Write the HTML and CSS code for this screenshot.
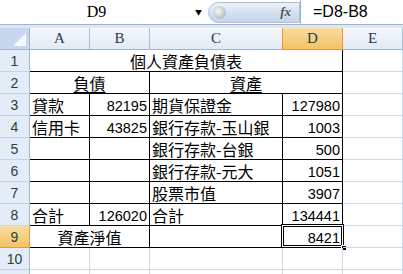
FILE: index.html
```html
<!DOCTYPE html>
<html lang="zh-Hant">

<head>
    <meta charset="UTF-8">
    <title>個人資產負債表</title>
    <link rel="stylesheet" href="styles.css">
</head>

<body>

    <div class="formula-bar">
        <div class="name-box">D9</div>
        <div class="drop">&#9660;</div>
        <div class="fx-button">
            <span class="knob"></span>
            <span class="fx">fx</span>
        </div>
        <div class="formula">=D8-B8</div>
    </div>
    <div class="band"></div>

    <div class="sheet">
        <!-- column headers -->
        <div class="corner">
            <svg width="29" height="21" viewBox="0 0 29 21">
                <polygon points="26,5 26,18 13,18" fill="#f4f7fb" />
            </svg>
        </div>
        <div class="col-head">A</div>
        <div class="col-head">B</div>
        <div class="col-head">C</div>
        <div class="col-head active">D</div>
        <div class="col-head">E</div>

        <!-- row 1 -->
        <div class="row-head">1</div>
        <div class="cell c span4 bb br">個人資產負債表</div>
        <div class="cell"></div>

        <!-- row 2 -->
        <div class="row-head">2</div>
        <div class="cell c span2 bb br"><u>負債</u></div>
        <div class="cell c span2 bb br"><u>資產</u></div>
        <div class="cell"></div>

        <!-- row 3 -->
        <div class="row-head">3</div>
        <div class="cell l bb br">貸款</div>
        <div class="cell r num bb br">82195</div>
        <div class="cell l bb br">期貨保證金</div>
        <div class="cell r num bb br">127980</div>
        <div class="cell"></div>

        <!-- row 4 -->
        <div class="row-head">4</div>
        <div class="cell l bb br">信用卡</div>
        <div class="cell r num bb br">43825</div>
        <div class="cell l bb br">銀行存款-玉山銀</div>
        <div class="cell r num bb br">1003</div>
        <div class="cell"></div>

        <!-- row 5 -->
        <div class="row-head">5</div>
        <div class="cell bb br"></div>
        <div class="cell bb br"></div>
        <div class="cell l bb br">銀行存款-台銀</div>
        <div class="cell r num bb br">500</div>
        <div class="cell"></div>

        <!-- row 6 -->
        <div class="row-head">6</div>
        <div class="cell bb br"></div>
        <div class="cell bb br"></div>
        <div class="cell l bb br">銀行存款-元大</div>
        <div class="cell r num bb br">1051</div>
        <div class="cell"></div>

        <!-- row 7 -->
        <div class="row-head">7</div>
        <div class="cell bb br"></div>
        <div class="cell bb br"></div>
        <div class="cell l bb br">股票市值</div>
        <div class="cell r num bb br">3907</div>
        <div class="cell"></div>

        <!-- row 8 -->
        <div class="row-head">8</div>
        <div class="cell l bb br">合計</div>
        <div class="cell r num bb br">126020</div>
        <div class="cell l bb br">合計</div>
        <div class="cell r num bb br">134441</div>
        <div class="cell"></div>

        <!-- row 9 -->
        <div class="row-head active">9</div>
        <div class="cell c span2 bb br">資產淨值</div>
        <div class="cell bb br"></div>
        <div class="cell r num bb br selected">
            8421
            <span class="sel"></span>
            <span class="handle"></span>
        </div>
        <div class="cell"></div>

        <!-- row 10 -->
        <div class="row-head">10</div>
        <div class="cell"></div>
        <div class="cell"></div>
        <div class="cell"></div>
        <div class="cell"></div>
        <div class="cell"></div>

        <!-- row 11, only its top edge shows -->
        <div class="row-head"></div>
        <div class="cell"></div>
        <div class="cell"></div>
        <div class="cell"></div>
        <div class="cell"></div>
        <div class="cell"></div>
    </div>

</body>

</html>
```

FILE: styles.css
```css
* {
    box-sizing: border-box;
}

body {
    margin: 0;
    width: 403px;
    height: 274px;
    overflow: hidden;
    background: #fff;
    font-family: "Noto Sans CJK TC", sans-serif;
}

/* formula bar */
.formula-bar {
    display: flex;
    align-items: center;
    height: 25px;
    border-bottom: 1px solid #9db3cf;
    background: #fff;
}

.name-box {
    width: 193px;
    text-align: center;
    font-family: "Liberation Serif", serif;
    font-size: 16px;
    color: #000;
}

.drop {
    width: 14px;
    font-size: 7px;
    color: #000;
    padding-left: 2px;
}

.fx-button {
    position: relative;
    display: flex;
    align-items: center;
    justify-content: space-between;
    width: 92px;
    height: 21px;
    margin-left: 1px;
    padding: 0 8px 0 4px;
    border: 1px solid #a9bfdb;
    border-radius: 11px 0 0 11px;
    background: linear-gradient(#eef3fa, #d3dff0 55%, #c5d5ea);
}

.knob {
    width: 13px;
    height: 13px;
    border-radius: 50%;
    background: radial-gradient(circle at 40% 40%, #fafafa, #b9bcc1 70%, #9a9ea5);
}

.fx {
    font-family: "Liberation Serif", serif;
    font-style: italic;
    font-weight: bold;
    font-size: 13px;
    color: #555;
}

.formula {
    flex: 1;
    height: 24px;
    padding-left: 12px;
    line-height: 24px;
    font-family: "Liberation Sans", sans-serif;
    font-size: 16px;
    color: #000;
    border-left: 1px solid #9db3cf;
}

.band {
    height: 3px;
    background: #dde7f4;
}

/* sheet grid */
.sheet {
    display: grid;
    grid-template-columns: 30px 60px 60px 133px 60px 60px;
    grid-auto-rows: 22px;
}

.corner {
    background: #c6d7ee;
    border-right: 1px solid #9eb6ce;
    border-bottom: 1px solid #9eb6ce;
}

.corner svg {
    display: block;
}

.col-head {
    display: flex;
    align-items: center;
    justify-content: center;
    background: linear-gradient(#f5f8fc, #e3eaf4);
    border-right: 1px solid #a9bfd6;
    border-bottom: 1px solid #9eb6ce;
    font-family: "Liberation Serif", serif;
    font-size: 15px;
    color: #1f3a4d;
}

.col-head.active {
    background: linear-gradient(#f9dca3, #f2c366);
    border-right-color: #f29436;
    border-bottom-color: #f29436;
    box-shadow: -1px 0 0 #f29436;
}

.row-head {
    display: flex;
    align-items: center;
    justify-content: center;
    background: #e4ecf7;
    border-right: 1px solid #9eb6ce;
    border-bottom: 1px solid #c5d3e6;
    font-family: "Liberation Sans", sans-serif;
    font-size: 14px;
    color: #27413e;
}

.row-head.active {
    background: linear-gradient(#f9dca3, #f2c366);
    border-right-color: #f29436;
    border-bottom-color: #f29436;
}

.cell {
    position: relative;
    display: flex;
    align-items: flex-end;
    border-right: 1px solid #d0d7e5;
    border-bottom: 1px solid #d0d7e5;
    font-size: 16px;
    line-height: 19px;
    color: #000;
    white-space: nowrap;
}

.cell.l {
    padding-left: 2px;
}

.cell.r {
    justify-content: flex-end;
    padding-right: 2px;
}

.cell.c {
    justify-content: center;
}

.cell.num {
    font-family: "Liberation Sans", sans-serif;
    font-size: 14.5px;
    line-height: 18px;
}

.cell.bb {
    border-bottom-color: #000;
}

.cell.br {
    border-right-color: #000;
}

.span2 {
    grid-column: span 2;
}

.span4 {
    grid-column: span 4;
}

u {
    text-underline-offset: 2px;
}

/* active cell outline */
.sel {
    position: absolute;
    top: -2px;
    left: -2px;
    right: -2px;
    bottom: -1px;
    border: 1px solid #000;
    box-shadow: inset 0 0 0 1px #fff, inset 0 0 0 2px #000;
}

.handle {
    position: absolute;
    right: -5px;
    bottom: -4px;
    width: 6px;
    height: 6px;
    background: #000;
    border: 1px solid #fff;
}
```
